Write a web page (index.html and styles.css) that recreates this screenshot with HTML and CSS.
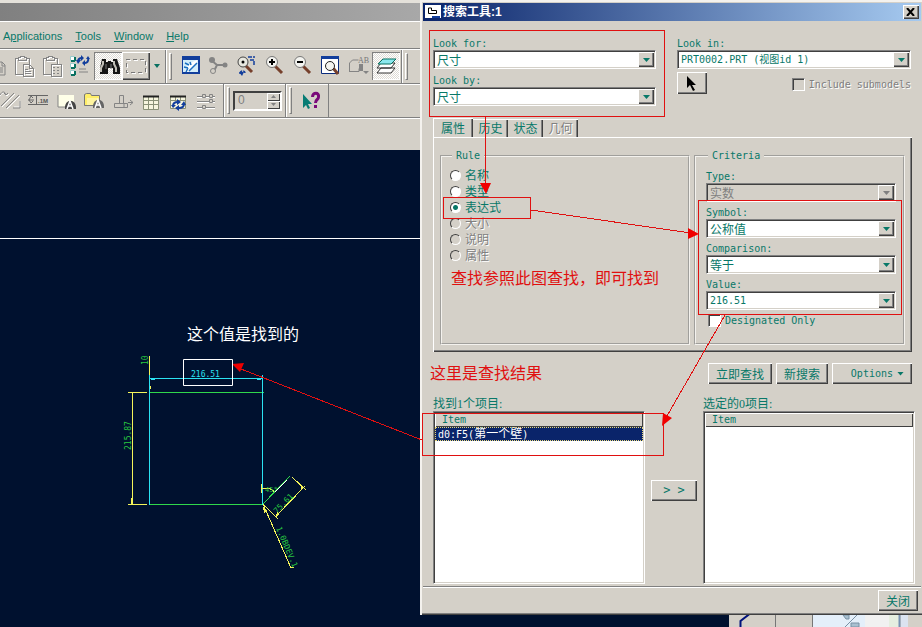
FILE: index.html
```html
<!DOCTYPE html>
<html lang="zh-CN">
<head>
<meta charset="utf-8">
<title>搜索工具:1</title>
<link rel="stylesheet" href="styles.css">
</head>
<body>
<main class="app">
  <div class="app-title"></div>
  <nav class="menu">
    <a href="#">A<u>p</u>plications</a><a href="#"><u>T</u>ools</a><a href="#"><u>W</u>indow</a><a href="#"><u>H</u>elp</a>
  </nav>
  <div class="toolbar">
    <button class="tool cut" aria-label="Copy"><svg width="10" height="28"><path d="M0 10h2l3 3v10H0M2 10v4h3M0 16h3M0 18h3M0 20h3" class="g"/></svg></button>
    <button class="tool" aria-label="Paste"><svg width="28" height="28" shape-rendering="crispEdges"><path d="M14 23H6V7h3M17 7h3v6M9 9V6h2V5h4v1h2v3zM14 13h6l4 4v8H14zM20 13v4h4M16 18h3M16 20h6M16 22h6" class="w"/><path d="M13 22H5V6h3M16 6h3v6M8 8V5h2V4h4v1h2v3zM13 12h6l4 4v8H13zM19 12v4h4M15 17h3M15 19h6M15 21h6" class="g"/></svg></button>
    <button class="tool" aria-label="Paste special"><svg width="28" height="28" shape-rendering="crispEdges"><path d="M14 23H6V7h3M17 7h3v6M9 9V6h2V5h4v1h2v3zM14 13h10v12H14z" class="w"/><path d="M13 22H5V6h3M16 6h3v6M8 8V5h2V4h4v1h2v3zM13 12h10v12H13zM15 15h2M19 15h2M15 18h2M19 18h2M15 21h2M19 21h2" class="g"/></svg></button>
    <button class="tool" aria-label="Regenerate"><svg width="28" height="28"><path d="M4.500 4.500h4v4h-4zM4.500 11.500h4v4h-4zM4.500 18.500h4v4h-4z" fill="#fff" stroke="#9cc"/><path d="M9 5v4M9 12v4M9 19v4M5 9h4M5 16h4M5 23h4" stroke="#087060" stroke-width="2" fill="none"/><path d="M13 17h7M13 20h9" class="g"/><path d="M12 10c0-3 2-4 4-4M22 6c1 3-1 5-3 5" fill="none" stroke="#123e9c" stroke-width="2"/><path d="M15 3l3 3-3 3zM10 8l2 4 3-4zM19 8l-3 3 3 3zM20 7l2-3 2 3z" fill="#123e9c"/></svg></button>
    <button class="tool pressed" aria-label="Find"><svg width="28" height="28"><path d="M8 7h4v3h2V9h3v1h2V7h4l3 9v6h-7v-6h-5v6H6v-6z" fill="#161616"/><path d="M9 9v3l-2 4v4M20 9v3l2 4v4" stroke="#c0beb6" stroke-width="2" fill="none"/><path d="M12 12v5M17 12v5" stroke="#777"/></svg></button>
    <button class="tool raised" aria-label="Select"><svg width="28" height="28" shape-rendering="crispEdges"><path d="M5 8h19v13H5z" fill="none" stroke="#fff" stroke-dasharray="4 3"/><path d="M4 7h19v13H4z" fill="none" stroke="#777" stroke-dasharray="4 3"/></svg></button>
    <button class="tool drop" aria-label="Select options"><svg width="14" height="28"><path d="M4 12h6l-3 4z" fill="#087060"/></svg></button>
    <i class="sep"></i><i class="grip"></i>
    <button class="tool" aria-label="Repaint"><svg width="28" height="28"><path d="M6 4h18v18H6z" fill="#123e9c"/><path d="M7 8h15v12H7z" fill="#d4eefa"/><path d="M21 8v3L12 20H9c1-5 4-9 12-12z" fill="#fff"/><path d="M21 11L13 19M9 11l4 2M8 15l4 1M14 10l1 3M12 16l-2 4" stroke="#1a6fc0" stroke-width="1.500" fill="none"/></svg></button>
    <button class="tool" aria-label="Spin center"><svg width="28" height="28"><path d="M7 8l6 5h8M13 13l-3 6" stroke="#848484" stroke-width="2" fill="none"/><circle cx="8" cy="8" r="3" fill="#848484"/><circle cx="21" cy="13" r="2.500" fill="#848484"/><circle cx="9" cy="19" r="2.500" fill="#d4d0c8" stroke="#848484"/></svg></button>
    <button class="tool" aria-label="Orient"><svg width="28" height="28"><path d="M14 14l6 6" stroke="#76402c" stroke-width="3"/><circle cx="11" cy="10" r="5" fill="#e8e8e0" stroke="#444"/><circle cx="11" cy="10" r="1.500"/><path d="M16 5h7M18 8h4v5M8 22c0-4 5-4 5-1" fill="none" stroke="#123e9c" stroke-width="1.500" stroke-dasharray="4 1"/><path d="M7 20l3 4 2-4z" fill="#123e9c"/></svg></button>
    <button class="tool" aria-label="Zoom in"><svg width="28" height="28"><path d="M15 14l7 7" stroke="#76402c" stroke-width="3"/><circle cx="12" cy="10" r="5.500" fill="#f4f4f0" stroke="#777"/><path d="M9 10h6M12 7v6" stroke="#000" stroke-width="2"/></svg></button>
    <button class="tool" aria-label="Zoom out"><svg width="28" height="28"><path d="M15 14l7 7" stroke="#76402c" stroke-width="3"/><circle cx="12" cy="10" r="5.500" fill="#f4f4f0" stroke="#777"/><path d="M9 10h6" stroke="#000" stroke-width="2"/></svg></button>
    <button class="tool" aria-label="Refit"><svg width="28" height="28"><path d="M5.500 4.500h17v17h-17z" fill="#fff" stroke="#0b2c7c"/><path d="M5 4h18v3H5z" fill="#123e9c"/><path d="M17 16l5 6" stroke="#76402c" stroke-width="3"/><circle cx="14" cy="14" r="4.500" fill="#f4f4f0" stroke="#222"/></svg></button>
    <button class="tool" aria-label="Saved views"><svg width="28" height="28"><path d="M5.500 20V11l3-3h6M5 19.500h10v-3" class="g"/><path d="M15 12h4v7h-4z" fill="#848484"/><path d="M19 19h6l-3 3z" fill="#848484"/><text x="14" y="11" class="ab">AB</text></svg></button>
    <button class="tool pressed" aria-label="Layers"><svg width="28" height="28"><path d="M9 16h14l-4 5H5zM9 11h14l-4 5H5z" fill="#fff" stroke="#333"/><path d="M11 7h13l-5 5H6z" fill="#8be8ee" stroke="#087060"/></svg></button>
    <i class="sep"></i><i class="grip"></i>
  </div>
  <div class="toolbar second">
    <div class="tools">
      <button class="tool cut2" aria-label="Tolerance"><svg width="24" height="28"><path d="M2 20L15 7M7 22L20 9M14 20h6v-6M0 9c2-4 6-4 7 0M5 6l2 3 2-2" class="w"/><path d="M1 19L14 6M6 21L19 8M13 21h7v-7M0 8c2-4 5-4 6 0M4 6l2 2 2-2" class="g"/></svg></button>
      <button class="tool" aria-label="Dimension"><svg width="28" height="28"><path d="M4 8.500h20M4 17.500h20M4 13h6M9 11l-2-2-2 4 2 3 2-2M12.500 9v9" fill="none" stroke="#666"/><text x="14" y="16" class="tm">.1M</text></svg></button>
      <button class="tool" aria-label="Note"><svg width="28" height="28"><path d="M6 8h16v12H6z" fill="#ffffe8"/><path d="M6 20h8M6 8v12" class="g"/><path d="M13 22c-1-11 12-11 11 0z" fill="#444"/><path d="M15 22l3-8 3 8M16 19h4" stroke="#fff" stroke-width="1.500" fill="none"/></svg></button>
      <button class="tool" aria-label="Open note"><svg width="28" height="28"><path d="M4.500 18.500v-11l2-1h4l1 2h8v10z" fill="#ffee68" stroke="#777"/><path d="M7 11h11v7H7z" fill="#fff5a0"/><path d="M13 21c-1-11 12-11 11 0z" fill="#666"/><path d="M15 21l3-8 3 8M16 18h4" stroke="#fff" stroke-width="1.500" fill="none"/></svg></button>
      <button class="tool" aria-label="Symbol"><svg width="28" height="28"><path d="M11.500 8.500h4v8h4v4h-13v-4h5zM7 16.500h9v4M20 15.500h5M22 13l3 2.500-3 2.500" class="g"/></svg></button>
      <button class="tool" aria-label="Table"><svg width="28" height="28"><path d="M7.500 9.500h15v13h-15z" fill="#f6f5df" stroke="#899077"/><path d="M12.500 9v14M17.500 9v14M8 13.500h14M8 17.500h14" stroke="#899077"/><path d="M7 9.500h16" stroke="#222" stroke-width="2"/></svg></button>
      <button class="tool" aria-label="Update table"><svg width="28" height="28"><path d="M6.500 9.500h15v12h-15z" fill="#f6f5df" stroke="#899077"/><path d="M11.500 9v5M16.500 9v5M7 13.500h14" stroke="#899077"/><path d="M6 9.500h16" stroke="#222" stroke-width="2"/><path d="M9 19c0-3 2-4 5-4M20 17c0 3-2 4-5 4" stroke="#123e9c" stroke-width="2" fill="none"/><path d="M13 12l4 3-4 3zM15 18l-4 3 4 3zM17 18l3-4 2 4zM7 18l2 3 3-3z" fill="#123e9c"/></svg></button>
      <button class="tool" aria-label="Parameters"><svg width="28" height="28"><path d="M5 10.500h18M5 15.500h18M5 21.500h18" stroke="#fff"/><path d="M5 9.500h5M13 9.500h4M20 9.500h3M5 14.500h12M20 14.500h3M5 20.500h5M13 20.500h10" class="g"/><path d="M10.500 7.500h3v3h-3zM17.500 12.500h3v3h-3zM10.500 18.500h3v3h-3zM17.500 7.500h3v3h-3z" class="g"/></svg></button>
      <i class="sep"></i><i class="grip"></i>
      <div class="spin"><input type="text" value="0" disabled aria-label="Level"><span><button disabled aria-label="Up"><i></i></button><button class="down" disabled aria-label="Down"><i></i></button></span></div>
      <i class="sep"></i><i class="grip"></i>
      <button class="tool help" aria-label="Context help"><svg width="33" height="28"><path d="M8 7v14l3-3 2 4 2-1-2-4h4z" fill="#087c74"/><path d="M17.500 10c0-5 7-5 6 0 0 3-3 2-3 6M20.500 18v3" fill="none" stroke="#7a0a7a" stroke-width="3"/></svg></button>
    </div>
  </div>
  <div class="message"></div>
  <section class="canvas">
    <svg class="cad" viewBox="0 150 420 477" width="420" height="477" fill="none" shape-rendering="crispEdges">
      <path d="M0 238.500h420" stroke="#fff"/>
      <path d="M149.500 392.500h114M149.500 504.500h114" stroke="#2fd84b"/>
      <path d="M149.500 375v130M262.500 375v130M149 378.500h114" stroke="#2be3f2"/>
      <path d="M150 378h5v2h-4zM262 378h-5v2h4z" fill="#2be3f2"/>
      <path d="M149.500 356v19M128 392.500h19M128 504.500h19M132.500 392v113M150.500 386v3M131.500 498v6" stroke="#f4f45a"/>
      <path d="M261.500 484v9M263 504l28 64 3-1M263 504l15 15M277 515l27-28M292 477l14 13M262 488h7l6 4" stroke="#f4f45a"/>
      <path d="M263 504l27-28" stroke="#2fd84b"/><path d="M275 492l12-12" stroke="#fff"/>
      <path d="M263 506l4 5-3 2zM305 486l-5 2 2 2zM276 517l1-5 3 2z" fill="#f4f45a"/>
      <g class="dims" shape-rendering="auto">
        <text x="191" y="377" class="cyan">216.51</text>
        <text transform="translate(131 450) rotate(-90)">215.87</text>
        <text transform="translate(148 365) rotate(-90)">10</text>
        <text transform="translate(277 514) rotate(-46)">75.61</text>
        <text x="265" y="492" class="tiny">45°</text>
        <text transform="translate(276 528) rotate(67)">1.0BDEV.1</text>
      </g>
    </svg>
    <svg class="tray" width="193" height="12"><path d="M0 0h193v12H0z" fill="#d4d0c8"/><path d="M11.500 12V6l9-7" stroke="#00127c" stroke-width="2" fill="none"/><path d="M46.500 0v12M83.500 0v12" stroke="#777"/><path d="M84 0h52v12H84z" fill="#e4effa"/><path d="M136 0h24v12h-24z" fill="#f1f1f1"/><path d="M160 0h10v12h-10z" fill="#e5eee0"/><path d="M170.500 0v12" stroke="#7892b4" stroke-width="2"/><path d="M172 0h7v12h-7z" fill="#dbe3f0"/><path d="M114 0h6v4h-3zM122 12V8h8v4zM128 0l-12 12" fill="#a8c0d0" stroke="#7890a4"/></svg>
  </section>
</main>

<section class="dialog" aria-label="搜索工具">
  <header class="titlebar">
    <svg width="16" height="14"><path d="M0 0h16v13H0z" fill="#fff"/><path d="M3.500 3v5.500h8v-3h-5V3z" fill="none" stroke="#000"/><path d="M7 12h8" stroke="#123e9c" stroke-width="2"/></svg>
    <h1>搜索工具:1</h1>
    <button class="close" aria-label="Close"><svg width="10" height="8"><path d="M1 0l7 8M8 0L1 8" stroke="#000" stroke-width="2"/></svg></button>
  </header>
  <div class="body">
    <div class="top">
      <div class="stack">
        <div class="field"><label for="lf">Look for:</label><div class="combo"><select id="lf" class="zh"><option>尺寸</option></select></div></div>
        <div class="field"><label for="lb">Look by:</label><div class="combo"><select id="lb" class="zh"><option>尺寸</option></select></div></div>
      </div>
      <div class="lookin">
        <div class="field"><label for="li">Look in:</label><div class="combo"><select id="li"><option>PRT0002.PRT (视图id 1)</option></select></div></div>
        <div class="pickrow">
          <button class="btn pick" aria-label="Pick"><svg width="12" height="16"><path d="M1 1v12l3-3 3 6 2-1-3-5h4z" fill="#000"/></svg></button>
          <label class="check off"><input type="checkbox" disabled>Include submodels</label>
        </div>
      </div>
    </div>
    <div class="tabs" role="tablist">
      <button role="tab" class="tab active">属性</button><button role="tab" class="tab">历史</button><button role="tab" class="tab">状态</button><button role="tab" class="tab" disabled>几何</button>
    </div>
    <div class="panel">
      <fieldset class="rule"><legend>Rule</legend>
        <label><input type="radio" name="rule">名称</label>
        <label><input type="radio" name="rule">类型</label>
        <label><input type="radio" name="rule" checked>表达式</label>
        <label class="off"><input type="radio" name="rule" disabled>大小</label>
        <label class="off"><input type="radio" name="rule" disabled>说明</label>
        <label class="off"><input type="radio" name="rule" disabled>属性</label>
      </fieldset>
      <fieldset class="criteria"><legend>Criteria</legend>
        <div class="field"><label for="ty">Type:</label><div class="combo disabled"><select id="ty" class="zh" disabled><option>实数</option></select></div></div>
        <div class="field"><label for="sy">Symbol:</label><div class="combo"><select id="sy" class="zh"><option>公称值</option></select></div></div>
        <div class="field"><label for="co">Comparison:</label><div class="combo"><select id="co" class="zh"><option>等于</option></select></div></div>
        <div class="field"><label for="va">Value:</label><div class="combo"><select id="va"><option>216.51</option></select></div></div>
        <label class="check"><input type="checkbox">Designated Only</label>
      </fieldset>
    </div>
    <div class="actions">
      <button class="btn zh find">立即查找</button><button class="btn zh">新搜索</button><button class="btn options">Options<i></i></button>
    </div>
    <div class="lists">
      <div class="result"><p>找到1个项目:</p>
        <div class="list"><table><thead><tr><th>Item</th></tr></thead><tbody><tr><td>d0:F5(<span class="zh">第一个壁</span>)</td></tr></tbody></table></div></div>
      <button class="btn move" aria-label="Add">&gt;&nbsp;&gt;</button>
      <div class="result"><p>选定的0项目:</p>
        <div class="list"><table><thead><tr><th>Item</th></tr></thead></table></div></div>
    </div>
  </div>
  <footer><button class="btn zh">关闭</button></footer>
</section>

<svg class="notes" viewBox="0 0 922 627" width="922" height="627" fill="none">
  <g stroke="#e01010" shape-rendering="crispEdges">
    <path d="M429.500 30.500h235v86h-235zM443.500 197.500h87v21h-87zM698.500 200.500h203v114h-203zM422.500 413.500h241v42h-241zM485.500 117v70"/>
    <path d="M531 210l160 23M725 315L667 416M422 440L241 369"/>
  </g>
  <path d="M480 183h11l-5 11zM688 228l11 6-11 5zM663 413l9 5-10 8zM232 364l12-1-4 9z" fill="#f00000"/>
  <path d="M183.500 359.500h49v26h-49z" stroke="#fff"/>
  <text x="187" y="340" fill="#fff">这个值是找到的</text>
  <text x="451" y="284" fill="#e01010">查找参照此图查找，即可找到</text>
  <text x="430" y="379" fill="#e01010">这里是查找结果</text>
</svg>
</body>
</html>
```
FILE: styles.css
```css
:root {
  --face: #d4d0c8;
  --teal: #087868;
  --shade: #808080;
  --dark: #404040;
}
* { box-sizing: border-box; }
body {
  margin: 0;
  height: 100vh;
  position: relative;
  overflow: hidden;
  background: var(--face);
  color: var(--teal);
  font: 10px/13px "DejaVu Sans Mono", "Noto Sans CJK SC", monospace;
}
button, select, input { font: inherit; color: inherit; margin: 0; padding: 0; }
button { border: 0; background: none; }
.zh { font: 12px/14px "Noto Sans CJK SC", sans-serif; }

/* main window */
.app { height: 100%; display: flex; flex-direction: column; }
.app-title {
  height: 22px;
  border-top: 3px solid #e4e1da;
  border-bottom: 1px solid #fff;
  background: linear-gradient(90deg, #808080, #a8a8a8 420px);
}
.menu {
  height: 26px;
  display: flex;
  gap: 13px;
  align-items: center;
  padding: 2px 3px 0;
  font: 11px/14px "Liberation Sans", sans-serif;
}
.menu a { color: var(--teal); text-decoration: none; }
.toolbar {
  height: 35px;
  display: flex;
  align-items: center;
  border-top: 1px solid var(--shade);
  box-shadow: inset 0 1px #fff;
}
.second { border-bottom: 1px solid var(--shade); }
.tools { display: flex; align-items: center; height: 100%; border-right: 1px solid var(--shade); }
.tool { width: 28px; height: 28px; flex: none; }
.tool svg { display: block; }
.cut { width: 10px; }
.cut2 { width: 24px; }
.drop { width: 14px; }
.help { width: 33px; }
.pressed {
  background: repeating-conic-gradient(#fff 0 25%, #dedbd5 0 50%) 0 0 / 2px 2px;
  box-shadow: inset 1px 1px var(--shade), inset -1px -1px #fff;
}
.raised { box-shadow: inset 1px 1px #fff, inset -1px -1px var(--dark), inset -2px -2px var(--shade); }
.sep { width: 2px; height: 33px; margin-left: 1px; background: linear-gradient(90deg, var(--shade) 50%, #fff 50%); }
.grip { width: 3px; height: 27px; margin: 0 4px 0 2px; border: 1px solid; border-color: #fff var(--shade) var(--shade) #fff; }
.tools .sep { margin-left: 3px; }
.tools .grip { margin-right: 3px; }
.g { fill: none; stroke: #848484; }
.w { fill: none; stroke: #fff; }
.ab { font: 8px "Liberation Serif", serif; fill: #777; }
.tm { font: bold 6px "Liberation Sans", sans-serif; fill: #555; }
.spin {
  display: flex;
  width: 49px;
  height: 20px;
  border: 2px solid;
  border-color: var(--dark) #fff #fff var(--dark);
  color: var(--shade);
}
.spin input { width: 32px; border: 0; background: none; padding-left: 3px; font-family: "Liberation Sans", sans-serif; font-size: 12px; }
.spin span { display: flex; flex-direction: column; }
.spin button {
  display: grid;
  place-items: center;
  width: 13px;
  height: 8px;
  box-shadow: inset 1px 1px #fff, inset -1px -1px var(--dark);
}
.spin i { width: 5px; height: 3px; background: var(--shade); clip-path: polygon(50% 0, 100% 100%, 0 100%); }
.spin .down i { clip-path: polygon(0 0, 100% 0, 50% 100%); }
.message { height: 32px; border-top: 1px solid #fff; }
.canvas { flex: 1; position: relative; background: #00112f; overflow: hidden; }
.cad { display: block; }
.tray { position: absolute; right: 0; bottom: 0; }
.dims { font: 8px "DejaVu Sans Mono", monospace; fill: #28c840; }
.dims .cyan { fill: #2be3f2; }
.dims .tiny { font-size: 7px; }

/* search dialog */
.dialog {
  position: absolute;
  inset: 0 0 12px 420px;
  display: flex;
  flex-direction: column;
  padding: 3px 1px 0 3px;
  background: var(--face);
  box-shadow: inset 2px 2px #f4f2ee, inset 0 -1px var(--dark), inset 0 -2px var(--shade);
}
.titlebar {
  display: flex;
  align-items: center;
  gap: 2px;
  height: 18px;
  padding: 0 2px;
  background: linear-gradient(90deg, #0a246a, #a6caf0);
}
.titlebar h1 { flex: 1; margin: 0; color: #fff; font: bold 12px/16px "Liberation Sans", "Noto Sans CJK SC", sans-serif; }
.close {
  display: grid;
  place-items: center;
  width: 16px;
  height: 14px;
  background: var(--face);
  box-shadow: inset 1px 1px #fff, inset -1px -1px var(--dark), inset -2px -2px var(--shade);
}
.body { flex: 1; display: flex; flex-direction: column; padding: 16px 6px 2px 10px; }
.top { display: grid; grid-template-columns: 223px 1fr; column-gap: 21px; margin-right: 4px; }
.stack { display: grid; gap: 5px; }
.field label { display: block; height: 13px; line-height: 13px; }
.combo {
  position: relative;
  height: 19px;
  background: #fff;
  border: 1px solid;
  border-color: var(--shade) #fff #fff var(--shade);
  box-shadow: inset 1px 1px var(--dark), inset -1px -1px var(--face);
}
.combo select {
  display: block;
  width: 100%;
  height: 17px;
  line-height: 16px;
  padding: 0 18px 0 3px;
  border: 0;
  appearance: none;
  background: none;
}
.combo::after {
  content: "";
  position: absolute;
  top: 1px;
  right: 1px;
  width: 16px;
  height: 15px;
  background: var(--face);
  box-shadow: inset 1px 1px #fff, inset -1px -1px var(--dark), inset -2px -2px var(--shade);
  pointer-events: none;
}
.combo::before {
  content: "";
  position: absolute;
  z-index: 1;
  top: 7px;
  right: 5px;
  width: 7px;
  height: 4px;
  background: var(--teal);
  clip-path: polygon(0 0, 100% 0, 50% 100%);
  pointer-events: none;
}
.combo.disabled { background: var(--face); }
.combo.disabled::before { background: var(--shade); }
.combo select:disabled { color: var(--shade); opacity: 1; }
.pickrow { display: flex; justify-content: space-between; align-items: start; padding-top: 3px; }
.btn {
  height: 21px;
  padding: 0 8px;
  background: var(--face);
  box-shadow: inset 1px 1px #fff, inset -1px -1px var(--dark), inset -2px -2px var(--shade);
}
.pick { width: 30px; height: 22px; display: grid; place-items: center; }
.check { display: flex; align-items: center; gap: 4px; }
.pickrow .check { padding-top: 6px; }
.check input {
  appearance: none;
  width: 13px;
  height: 13px;
  background: #fff;
  border: 1px solid;
  border-color: var(--shade) #fff #fff var(--shade);
  box-shadow: inset 1px 1px var(--dark);
}
.off { color: var(--shade); text-shadow: 1px 1px #fff; }
.check.off input, .rule .off input { background: var(--face); }
.tabs { display: flex; align-items: flex-end; height: 19px; margin-top: 12px; }
.tab {
  width: 35px;
  height: 18px;
  font: 12px/16px "Noto Sans CJK SC", sans-serif;
  box-shadow: inset 0 1px #fff, inset -1px 0 var(--dark), inset -2px 0 var(--shade);
}
.tab:disabled { color: var(--shade); text-shadow: 1px 1px #fff; }
.tab.active { width: 40px; height: 19px; box-shadow: inset 1px 1px #fff, inset -1px 0 var(--dark), inset -2px 0 var(--shade); }
.panel {
  display: grid;
  grid-template-columns: 1fr 211px;
  gap: 4px;
  margin-right: 3px;
  padding: 13px 7px 7px;
  box-shadow: inset 1px 1px #fff, inset -1px -1px var(--dark), inset -2px -2px var(--shade);
}
fieldset { margin: 0; min-width: 0; border: 2px groove #f4f2ee; }
legend { padding: 0 4px; line-height: 12px; margin-left: 2px; }
.rule { padding: 5px 8px; }
.rule label { display: flex; align-items: center; gap: 4px; height: 16px; font: 12px/16px "Noto Sans CJK SC", sans-serif; }
.rule input {
  appearance: none;
  width: 11px;
  height: 11px;
  border-radius: 50%;
  border: 1px solid;
  border-color: var(--dark) #fff #fff var(--dark);
  background: #fff;
}
.rule input:checked { background: radial-gradient(circle, var(--teal) 2px, #fff 3px); }
.criteria { padding: 8px 7px 16px 10px; }
.criteria .field { margin-bottom: 4px; }
.criteria .check { padding-left: 2px; }
.actions { display: flex; justify-content: flex-end; gap: 4px; margin: 11px 3px 0 0; }
.find { width: 64px; }
.options { width: 80px; display: flex; align-items: center; justify-content: flex-end; gap: 4px; }
.options i { width: 7px; height: 4px; background: var(--teal); clip-path: polygon(0 0, 100% 0, 50% 100%); }
.lists { flex: 1; display: grid; grid-template-columns: 1fr 46px 1fr; gap: 6px; padding-top: 13px; }
.result { display: flex; flex-direction: column; }
.result p { margin: 0; font: 12px/14px "Liberation Serif", "Noto Sans CJK SC", serif; }
.list {
  flex: 1;
  padding: 1px;
  background: #fff;
  border: 1px solid;
  border-color: var(--shade) #fff #fff var(--shade);
  box-shadow: inset 1px 1px var(--dark), inset -1px -1px var(--face);
}
.list table { width: 100%; border-collapse: collapse; }
.list th {
  height: 14px;
  padding: 0 7px;
  text-align: left;
  font-weight: normal;
  line-height: 14px;
  background: var(--face);
  box-shadow: inset 1px 1px #fff, inset -1px -1px var(--dark);
}
.list td {
  height: 14px;
  padding: 0 3px;
  line-height: 12px;
  color: #fff;
  background: #0a246a;
  outline: 1px dotted #e8d878;
  outline-offset: -1px;
}
.list td .zh { line-height: 12px; }
.move { align-self: center; font-size: 12px; }
footer {
  display: flex;
  justify-content: flex-end;
  padding: 3px 3px 4px;
  border-top: 1px solid var(--shade);
  box-shadow: inset 0 1px #fff;
}

/* callouts over both windows */
.notes { position: absolute; top: 0; left: 0; pointer-events: none; font: 16px "Noto Sans CJK SC", sans-serif; }
```
